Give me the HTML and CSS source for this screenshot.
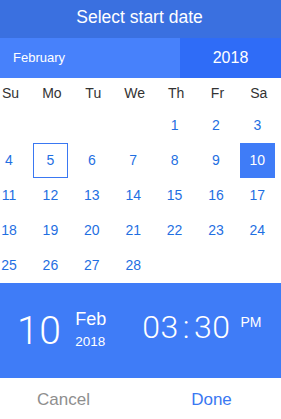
FILE: index.html
```html
<!DOCTYPE html>
<html>
<head>
  <meta name="viewport" content="width=device-width, initial-scale=1.0">
  <title>Select start date</title>
  <link rel="stylesheet" href="styles.css">
</head>
<body>
  <div class="picker">
    <div class="header">Select start date</div>
    <div class="month-bar">
      <div class="month">February</div>
      <div class="year">2018</div>
    </div>
    <div class="calendar">
      <div class="weekday">Su</div>
      <div class="weekday">Mo</div>
      <div class="weekday">Tu</div>
      <div class="weekday">We</div>
      <div class="weekday">Th</div>
      <div class="weekday">Fr</div>
      <div class="weekday">Sa</div>

      <div class="day"></div>
      <div class="day"></div>
      <div class="day"></div>
      <div class="day"></div>
      <div class="day">1</div>
      <div class="day">2</div>
      <div class="day">3</div>

      <div class="day">4</div>
      <div class="day today">5</div>
      <div class="day">6</div>
      <div class="day">7</div>
      <div class="day">8</div>
      <div class="day">9</div>
      <div class="day selected">10</div>

      <div class="day">11</div>
      <div class="day">12</div>
      <div class="day">13</div>
      <div class="day">14</div>
      <div class="day">15</div>
      <div class="day">16</div>
      <div class="day">17</div>

      <div class="day">18</div>
      <div class="day">19</div>
      <div class="day">20</div>
      <div class="day">21</div>
      <div class="day">22</div>
      <div class="day">23</div>
      <div class="day">24</div>

      <div class="day">25</div>
      <div class="day">26</div>
      <div class="day">27</div>
      <div class="day">28</div>
    </div>
    <div class="summary">
      <div class="big-day">10</div>
      <div class="month-year">
        <span class="short-month">Feb</span>
        <span class="short-year">2018</span>
      </div>
      <div class="time">03<span class="colon">:</span>30</div>
      <div class="ampm">PM</div>
    </div>
    <div class="actions">
      <button class="cancel">Cancel</button>
      <button class="done">Done</button>
    </div>
  </div>
</body>
</html>
```

FILE: styles.css
```css
body {
  font-family: "Liberation Sans", Arial, sans-serif;
  background-color: #fff;
  margin: 0;
}

.picker {
  width: 281px;
  height: 419px;
  overflow: hidden;
}

.header {
  height: 38px;
  background-color: #3a70e0;
  color: #fff;
  font-size: 17.5px;
  line-height: 34px;
  text-align: center;
  padding-right: 2px;
}

.month-bar {
  display: flex;
  height: 40px;
  color: #fff;
}

.month {
  width: 167px;
  padding-left: 13px;
  background-color: #4781fb;
  font-size: 13px;
  line-height: 40px;
}

.year {
  flex: 1;
  background-color: #2f6cf7;
  font-size: 16px;
  line-height: 40px;
  text-align: center;
}

.calendar {
  display: grid;
  grid-template-columns: repeat(7, 35px);
  grid-template-rows: 30px repeat(5, 35px);
  column-gap: 6.4px;
  margin-left: -8.5px;
  width: 300px;
}

.weekday {
  text-align: center;
  font-size: 14px;
  line-height: 30px;
  color: #333;
  padding-left: 3px;
}

.day {
  text-align: center;
  font-size: 14px;
  line-height: 35px;
  color: #1f6fe2;
  box-sizing: border-box;
}

.today {
  border: 1px solid #3a78f2;
  line-height: 33px;
}

.selected {
  background-color: #3f7cf7;
  color: #fff;
}

.summary {
  display: flex;
  align-items: center;
  height: 95px;
  background-color: #3f7cf7;
  color: #fff;
  font-family: Roboto, "Liberation Sans", sans-serif;
  font-weight: 300;
}

.big-day {
  margin-left: 17px;
  font-size: 39px;
  letter-spacing: 0.5px;
}

.month-year {
  display: flex;
  flex-direction: column;
  margin-left: 14px;
  margin-top: -2px;
}

.short-month {
  font-family: "Liberation Sans", Arial, sans-serif;
  font-weight: normal;
  font-size: 18px;
  line-height: 24px;
}

.short-year {
  font-family: "Liberation Sans", Arial, sans-serif;
  font-weight: normal;
  font-size: 13.5px;
  line-height: 22px;
}

.time {
  margin-left: 36px;
  font-size: 32px;
  letter-spacing: 0.5px;
  margin-top: -8px;
}

.colon {
  margin: 0 4px;
}

.ampm {
  margin-left: 10px;
  margin-top: -18px;
  font-family: "Liberation Sans", Arial, sans-serif;
  font-weight: normal;
  font-size: 14px;
}

.actions {
  display: flex;
  height: 41px;
}

.actions button {
  flex: 1;
  border: none;
  background: none;
  font-family: "Liberation Sans", Arial, sans-serif;
  font-size: 17px;
  padding: 0;
  margin-top: 2px;
}

.cancel {
  color: #8e8e8e;
  text-align: center;
  padding-right: 21px !important;
}

.done {
  color: #3a78f2;
  padding-right: 6px !important;
}
```
